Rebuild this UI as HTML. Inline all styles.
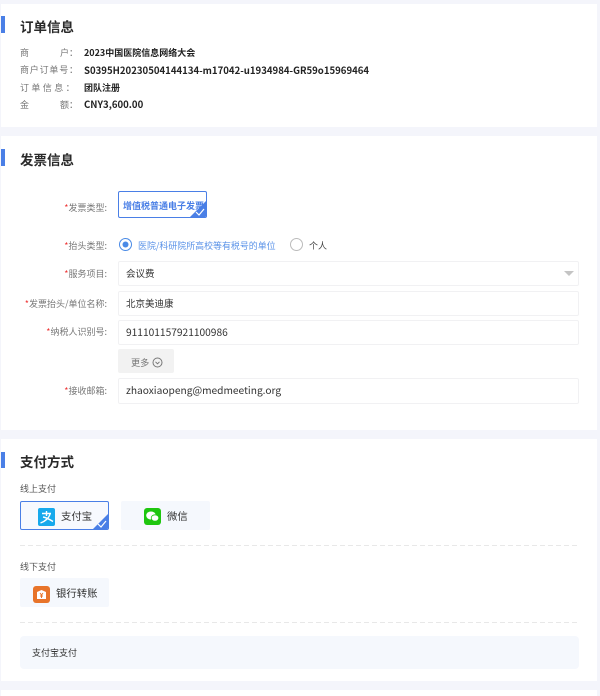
<!DOCTYPE html>
<html lang="zh"><head><meta charset="utf-8">
<style>
html,body{margin:0;padding:0}
body{width:600px;height:696px;position:relative;overflow:hidden;background:#f4f5fb;font-family:"Noto Sans CJK SC","Liberation Sans",sans-serif;color:#222;filter:blur(.3px)}
.a{position:absolute;white-space:nowrap}
.card{position:absolute;left:1px;width:596px;background:#fff}
.bar{position:absolute;left:1px;width:4px;height:17px;background:#4a7fe6}
.h{position:absolute;left:20px;font-size:13.5px;font-weight:700;color:#2a2a2a;line-height:20px;white-space:nowrap}
.l{position:absolute;left:20px;font-size:9px;color:#777;line-height:14px;white-space:nowrap}
.v{position:absolute;left:84px;font-size:9px;font-weight:700;color:#222;line-height:14px;white-space:nowrap}
.fl{position:absolute;right:493px;font-size:9px;color:#777;line-height:14px;white-space:nowrap}
.fl b{color:#e33;font-weight:400}
.in{position:absolute;left:118px;width:452px;height:23px;border:1px solid #f1f1f3;border-radius:2px;background:#fff;padding-left:7px;font-size:10.2px;line-height:22px;color:#333}
.pay{position:absolute;background:#f5f8fd;border-radius:2px}
.dash{position:absolute;left:20px;width:559px;height:1px;background:repeating-linear-gradient(90deg,#e8e8e8 0 5px,transparent 5px 8px)}
.t{position:absolute;font-size:10.4px;color:#333;line-height:14px;white-space:nowrap}
</style></head><body>
<div class="card" style="top:4px;height:123px"></div>
<div class="card" style="top:136px;height:294px"></div>
<div class="card" style="top:439px;height:242px"></div>
<div class="card" style="top:690px;height:6px"></div>

<div class="bar" style="top:16px"></div>
<div class="h" style="top:16px">订单信息</div>
<div class="l" style="top:46px">商<span style="margin-left:31px">户：</span></div>
<div class="v" style="top:46px">2023中国医院信息网络大会</div>
<div class="l" style="top:63px;letter-spacing:.8px">商户订单号：</div>
<div class="v" style="top:63px;font-size:9.6px">S0395H20230504144134-m17042-u1934984-GR59o15969464</div>
<div class="l" style="top:81px;letter-spacing:2.4px">订单信息：</div>
<div class="v" style="top:81px">团队注册</div>
<div class="l" style="top:98px">金<span style="margin-left:31px">额：</span></div>
<div class="v" style="top:97px;font-size:9.6px">CNY3,600.00</div>

<div class="bar" style="top:149px"></div>
<div class="h" style="top:149px">发票信息</div>
<div class="fl" style="top:201px"><b>*</b>发票类型:</div>
<div class="a" style="left:118px;top:191px;width:87px;height:25px;border:1px solid #4a7fe6;border-radius:2px;background:#fff;overflow:hidden;font-size:9px;font-weight:700;color:#4a7fe6;line-height:25px">
<span style="position:absolute;left:4px;top:1px">增值税普通电子发票</span>
<svg style="position:absolute;right:0;bottom:0" width="16" height="16" viewBox="0 0 16 16"><path d="M16 0V16H0Z" fill="#4a7fe6"/><path d="M6 11l3 3 5-6" fill="none" stroke="#fff" stroke-width="1.2"/></svg>
</div>

<div class="fl" style="top:239px"><b>*</b>抬头类型:</div>
<svg class="a" style="left:119px;top:238px" width="13" height="13"><circle cx="6.500" cy="6.500" r="6" fill="#fff" stroke="#4a8ae6"/><circle cx="6.500" cy="6.500" r="3" fill="#4a8ae6"/></svg>
<div class="a" style="left:138px;top:239px;font-size:8.950px;line-height:14px;color:#5b93e8">医院/科研院所高校等有税号的单位</div>
<svg class="a" style="left:290px;top:238px" width="13" height="13"><circle cx="6.500" cy="6.500" r="6" fill="#fff" stroke="#bbb"/></svg>
<div class="a" style="left:309px;top:239px;font-size:9px;line-height:14px;color:#444">个人</div>

<div class="fl" style="top:267px"><b>*</b>服务项目:</div>
<div class="in" style="top:261px;font-size:9.5px;line-height:23px">会议费</div>
<svg class="a" style="left:564px;top:271px" width="10" height="6"><path d="M0 0H10L5 5Z" fill="#c4c4c4"/></svg>

<div class="fl" style="top:297px"><b>*</b>发票抬头/单位名称:</div>
<div class="in" style="top:291px;font-size:9.5px;line-height:23px">北京美迪康</div>
<div class="fl" style="top:325px"><b>*</b>纳税人识别号:</div>
<div class="in" style="top:320px">911101157921100986</div>

<div class="a" style="left:118px;top:349px;width:56px;height:24px;background:#f2f2f2;border-radius:2px;font-size:9.2px;line-height:26px;color:#777;padding-left:13px;box-sizing:border-box">更多</div>
<svg class="a" style="left:152px;top:357px" width="11" height="11"><circle cx="5.500" cy="5.500" r="4.500" fill="none" stroke="#777"/><path d="M3.500 4.800l2 2 2-2" fill="none" stroke="#777"/></svg>

<div class="fl" style="top:384px"><b>*</b>接收邮箱:</div>
<div class="in" style="top:378px;height:24px">zhaoxiaopeng@medmeeting.org</div>

<div class="bar" style="top:452px;height:16px"></div>
<div class="h" style="top:451px">支付方式</div>
<div class="t" style="left:20px;top:482px;font-size:9px;color:#555">线上支付</div>
<div class="a" style="left:20px;top:501px;width:87px;height:27px;border:1px solid #4a7fe6;border-radius:2px;background:#f7f9fe;overflow:hidden">
<svg style="position:absolute;right:0;bottom:0" width="15" height="15" viewBox="0 0 15 15"><path d="M15 0V15H0Z" fill="#4a7fe6"/><path d="M5 10l3 3 5-6" fill="none" stroke="#fff" stroke-width="1.2"/></svg>
</div>
<svg class="a" style="left:38px;top:508px" width="17" height="18" viewBox="0 0 17 18"><rect width="17" height="18" rx="2" fill="#17a9ec"/><path d="M4 5.500H13M8.500 3V8M12 6C11 10 7 13.500 2.500 15M5 9C8 9.500 11 11 15 13.500" fill="none" stroke="#fff" stroke-width="1.400"/></svg>
<div class="t" style="left:61px;top:509px">支付宝</div>

<div class="pay" style="left:121px;top:501px;width:89px;height:29px"></div>
<svg class="a" style="left:144px;top:508px" width="17" height="17" viewBox="0 0 17 17"><rect width="17" height="17" rx="3" fill="#1ec60f"/><ellipse cx="7" cy="7.500" rx="4.800" ry="4" fill="#fff"/><ellipse cx="11" cy="10" rx="3.800" ry="3.200" fill="#fff" stroke="#1ec60f" stroke-width=".8"/></svg>
<div class="t" style="left:167px;top:509px">微信</div>

<div class="dash" style="top:545px"></div>
<div class="t" style="left:20px;top:560px;font-size:9px;color:#555">线下支付</div>
<div class="pay" style="left:20px;top:578px;width:89px;height:29px"></div>
<svg class="a" style="left:33px;top:586px" width="17" height="17" viewBox="0 0 17 17"><rect width="17" height="17" rx="3" fill="#e8742a"/><path d="M4 6L8.500 4L13 6V13H4Z" fill="#fff"/><path d="M7 7l1.500 2L10 7M8.500 9V12M7 10H10" fill="none" stroke="#e8742a"/></svg>
<div class="t" style="left:56px;top:586px">银行转账</div>

<div class="dash" style="top:622px"></div>
<div class="pay" style="left:20px;top:636px;width:559px;height:33px;border-radius:4px"></div>
<div class="t" style="left:32px;top:646px;font-size:9px">支付宝支付</div>
</body></html>
